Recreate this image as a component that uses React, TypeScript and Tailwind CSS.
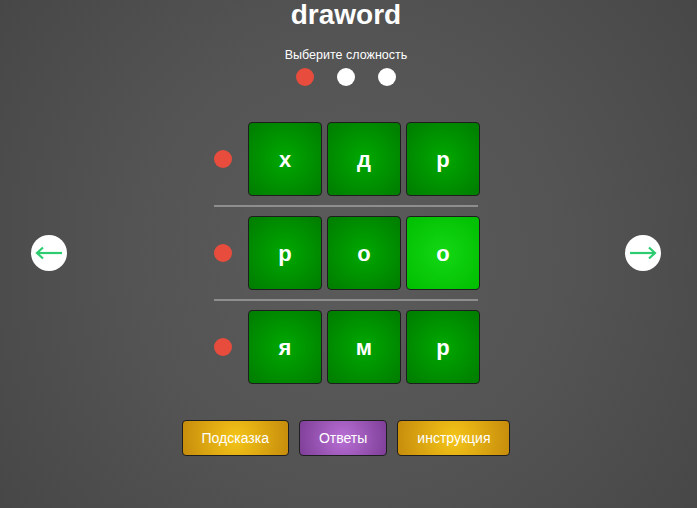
import React from "react";

const rows = [
  { letters: ["х", "д", "р"], hi: [false, false, false] },
  { letters: ["р", "о", "о"], hi: [false, false, true] },
  { letters: ["я", "м", "р"], hi: [false, false, false] },
];

function Arrow({ dir }: { dir: "left" | "right" }) {
  return (
    <div className="w-[36px] h-[36px] rounded-full bg-white flex items-center justify-center">
      <svg width="28" height="14" viewBox="0 0 28 14" fill="none">
        {dir === "left" ? (
          <>
            <path d="M2 7 H27" stroke="#2ecc71" strokeWidth="2.2" />
            <path d="M8 1.5 L2 7 L8 12.5" stroke="#2ecc71" strokeWidth="2.2" strokeLinejoin="miter" />
          </>
        ) : (
          <>
            <path d="M1 7 H26" stroke="#2ecc71" strokeWidth="2.2" />
            <path d="M20 1.5 L26 7 L20 12.5" stroke="#2ecc71" strokeWidth="2.2" strokeLinejoin="miter" />
          </>
        )}
      </svg>
    </div>
  );
}

export default function App() {
  return (
    <div
      className="w-full min-h-screen h-[508px] flex flex-col items-center pr-[5px] pt-[1px] text-white bg-[radial-gradient(circle_at_center,#5b5b5b_0%,#545454_50%,#474747_100%)]"
      style={{ fontFamily: '"Liberation Sans", Arial, sans-serif' }}
    >
      <h1 className="text-[28px] leading-[28px] font-bold">draword</h1>
      <div className="mt-[19px] text-[12.5px] leading-[15px]">Выберите сложность</div>
      <div className="mt-[5px] flex gap-[23px]">
        <div className="w-[18px] h-[18px] rounded-full bg-[#e74c3c]" />
        <div className="w-[18px] h-[18px] rounded-full bg-white" />
        <div className="w-[18px] h-[18px] rounded-full bg-white" />
      </div>

      <div className="mt-[36px] w-full flex items-center pl-[31px] pr-[31px]">
        <Arrow dir="left" />
        <div className="flex-1 flex justify-center pl-[2px]">
          <div className="flex flex-col w-[266px]">
            {rows.map((row, i) => (
              <React.Fragment key={i}>
                {i > 0 && <div className="my-[9px] h-[2px] w-[264px] bg-[#8e8e8e]" />}
                <div className="flex items-center">
                  <div className="w-[18px] h-[18px] rounded-full bg-[#e74c3c] mr-[16px]" />
                  <div className="flex gap-[5px]">
                    {row.letters.map((l, j) => (
                      <div
                        key={j}
                        className={
                          "w-[74px] h-[74px] rounded-[4px] border border-[#1e1e1e] flex items-center justify-center text-[22px] font-bold " +
                          (row.hi[j]
                            ? "bg-[radial-gradient(circle_at_center,#14d814_0%,#00bd00_100%)]"
                            : "bg-[radial-gradient(circle_at_center,#00a800_0%,#007c00_100%)]")
                        }
                      >
                        {l}
                      </div>
                    ))}
                  </div>
                </div>
              </React.Fragment>
            ))}
          </div>
        </div>
        <Arrow dir="right" />
      </div>

      <div className="mt-[36px] flex gap-[10px] text-[14px]">
        <button className="h-[36px] px-[19px] rounded-[4px] border border-[#1e1e1e] text-white bg-[radial-gradient(circle_at_center,#f5c518_0%,#c68c0c_100%)]">
          Подсказка
        </button>
        <button className="h-[36px] px-[19px] rounded-[4px] border border-[#1e1e1e] text-white bg-[radial-gradient(circle_at_center,#b86fd4_0%,#7e3f98_100%)]">
          Ответы
        </button>
        <button className="h-[36px] px-[19px] rounded-[4px] border border-[#1e1e1e] text-white bg-[radial-gradient(circle_at_center,#f5c518_0%,#c68c0c_100%)]">
          инструкция
        </button>
      </div>
    </div>
  );
}
